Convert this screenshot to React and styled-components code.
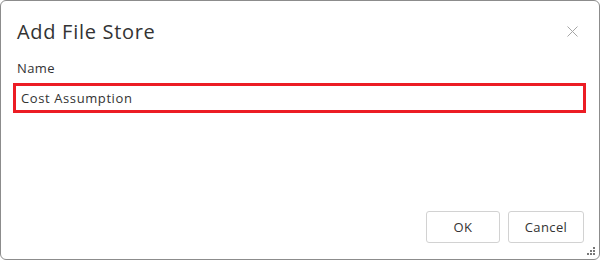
import React from 'react';
import styled, { createGlobalStyle } from 'styled-components';

const GlobalStyle = createGlobalStyle`
  html, body {
    margin: 0;
    padding: 0;
    background: #ffffff;
  }
  body {
    font-family: "Open Sans", "Noto Sans", sans-serif;
    color: #333333;
  }
`;

const Dialog = styled.div`
  position: relative;
  box-sizing: border-box;
  width: 600px;
  height: 260px;
  border: 1px solid #8c8c8c;
  border-radius: 6px;
  background: #ffffff;
  display: flex;
  flex-direction: column;
`;

const Header = styled.div`
  display: flex;
  align-items: center;
  justify-content: space-between;
  padding: 14px 16px 0 16px;
  height: 32px;
`;

const Title = styled.h2`
  margin: 0;
  font-size: 20px;
  font-weight: 400;
  color: #333333;
  letter-spacing: 0.7px;
`;

const CloseButton = styled.button`
  border: 0;
  background: transparent;
  padding: 0;
  width: 14px;
  height: 14px;
  margin-right: 4px;
  cursor: pointer;
  display: flex;
  align-items: center;
  justify-content: center;
`;

const Body = styled.div`
  flex: 1;
  padding: 12px 13px 0 12px;
`;

const Label = styled.label`
  display: block;
  font-size: 13px;
  color: #333333;
  letter-spacing: 0.4px;
  padding-left: 4px;
  margin-bottom: 6px;
`;

const Input = styled.input`
  box-sizing: border-box;
  width: 100%;
  height: 30px;
  border: 3px solid #ec1c24;
  border-radius: 0;
  padding: 0 5px;
  font-family: inherit;
  font-size: 13px;
  letter-spacing: 0.6px;
  color: #333333;
  outline: none;
`;

const Footer = styled.div`
  display: flex;
  justify-content: flex-end;
  gap: 8px;
  padding: 0 15px 16px 0;
`;

const Button = styled.button`
  box-sizing: border-box;
  width: ${(p) => p.$width || 75}px;
  height: 32px;
  border: 1px solid #d2d2d2;
  border-radius: 3px;
  background: #ffffff;
  font-family: inherit;
  font-size: 13px;
  letter-spacing: 0.4px;
  color: #333333;
  cursor: pointer;
`;

const Grip = styled.svg`
  position: absolute;
  right: 4px;
  bottom: 4px;
`;

export default function App() {
  return (
    <>
      <GlobalStyle />
      <Dialog>
        <Header>
          <Title>Add File Store</Title>
          <CloseButton aria-label="Close">
            <svg width="11" height="11" viewBox="0 0 11 11">
              <path d="M0.5 0.5 L10.5 10.5 M10.5 0.5 L0.5 10.5" stroke="#a6a6a6" strokeWidth="1" />
            </svg>
          </CloseButton>
        </Header>
        <Body>
          <Label>Name</Label>
          <Input defaultValue="Cost Assumption" />
        </Body>
        <Footer>
          <Button $width={74}>OK</Button>
          <Button $width={76}>Cancel</Button>
        </Footer>
        <Grip width="8" height="8" viewBox="0 0 8 8">
          <rect x="6" y="0" width="2" height="2" fill="#777" />
          <rect x="3" y="3" width="2" height="2" fill="#777" />
          <rect x="6" y="3" width="2" height="2" fill="#777" />
          <rect x="0" y="6" width="2" height="2" fill="#777" />
          <rect x="3" y="6" width="2" height="2" fill="#777" />
          <rect x="6" y="6" width="2" height="2" fill="#777" />
        </Grip>
      </Dialog>
    </>
  );
}
